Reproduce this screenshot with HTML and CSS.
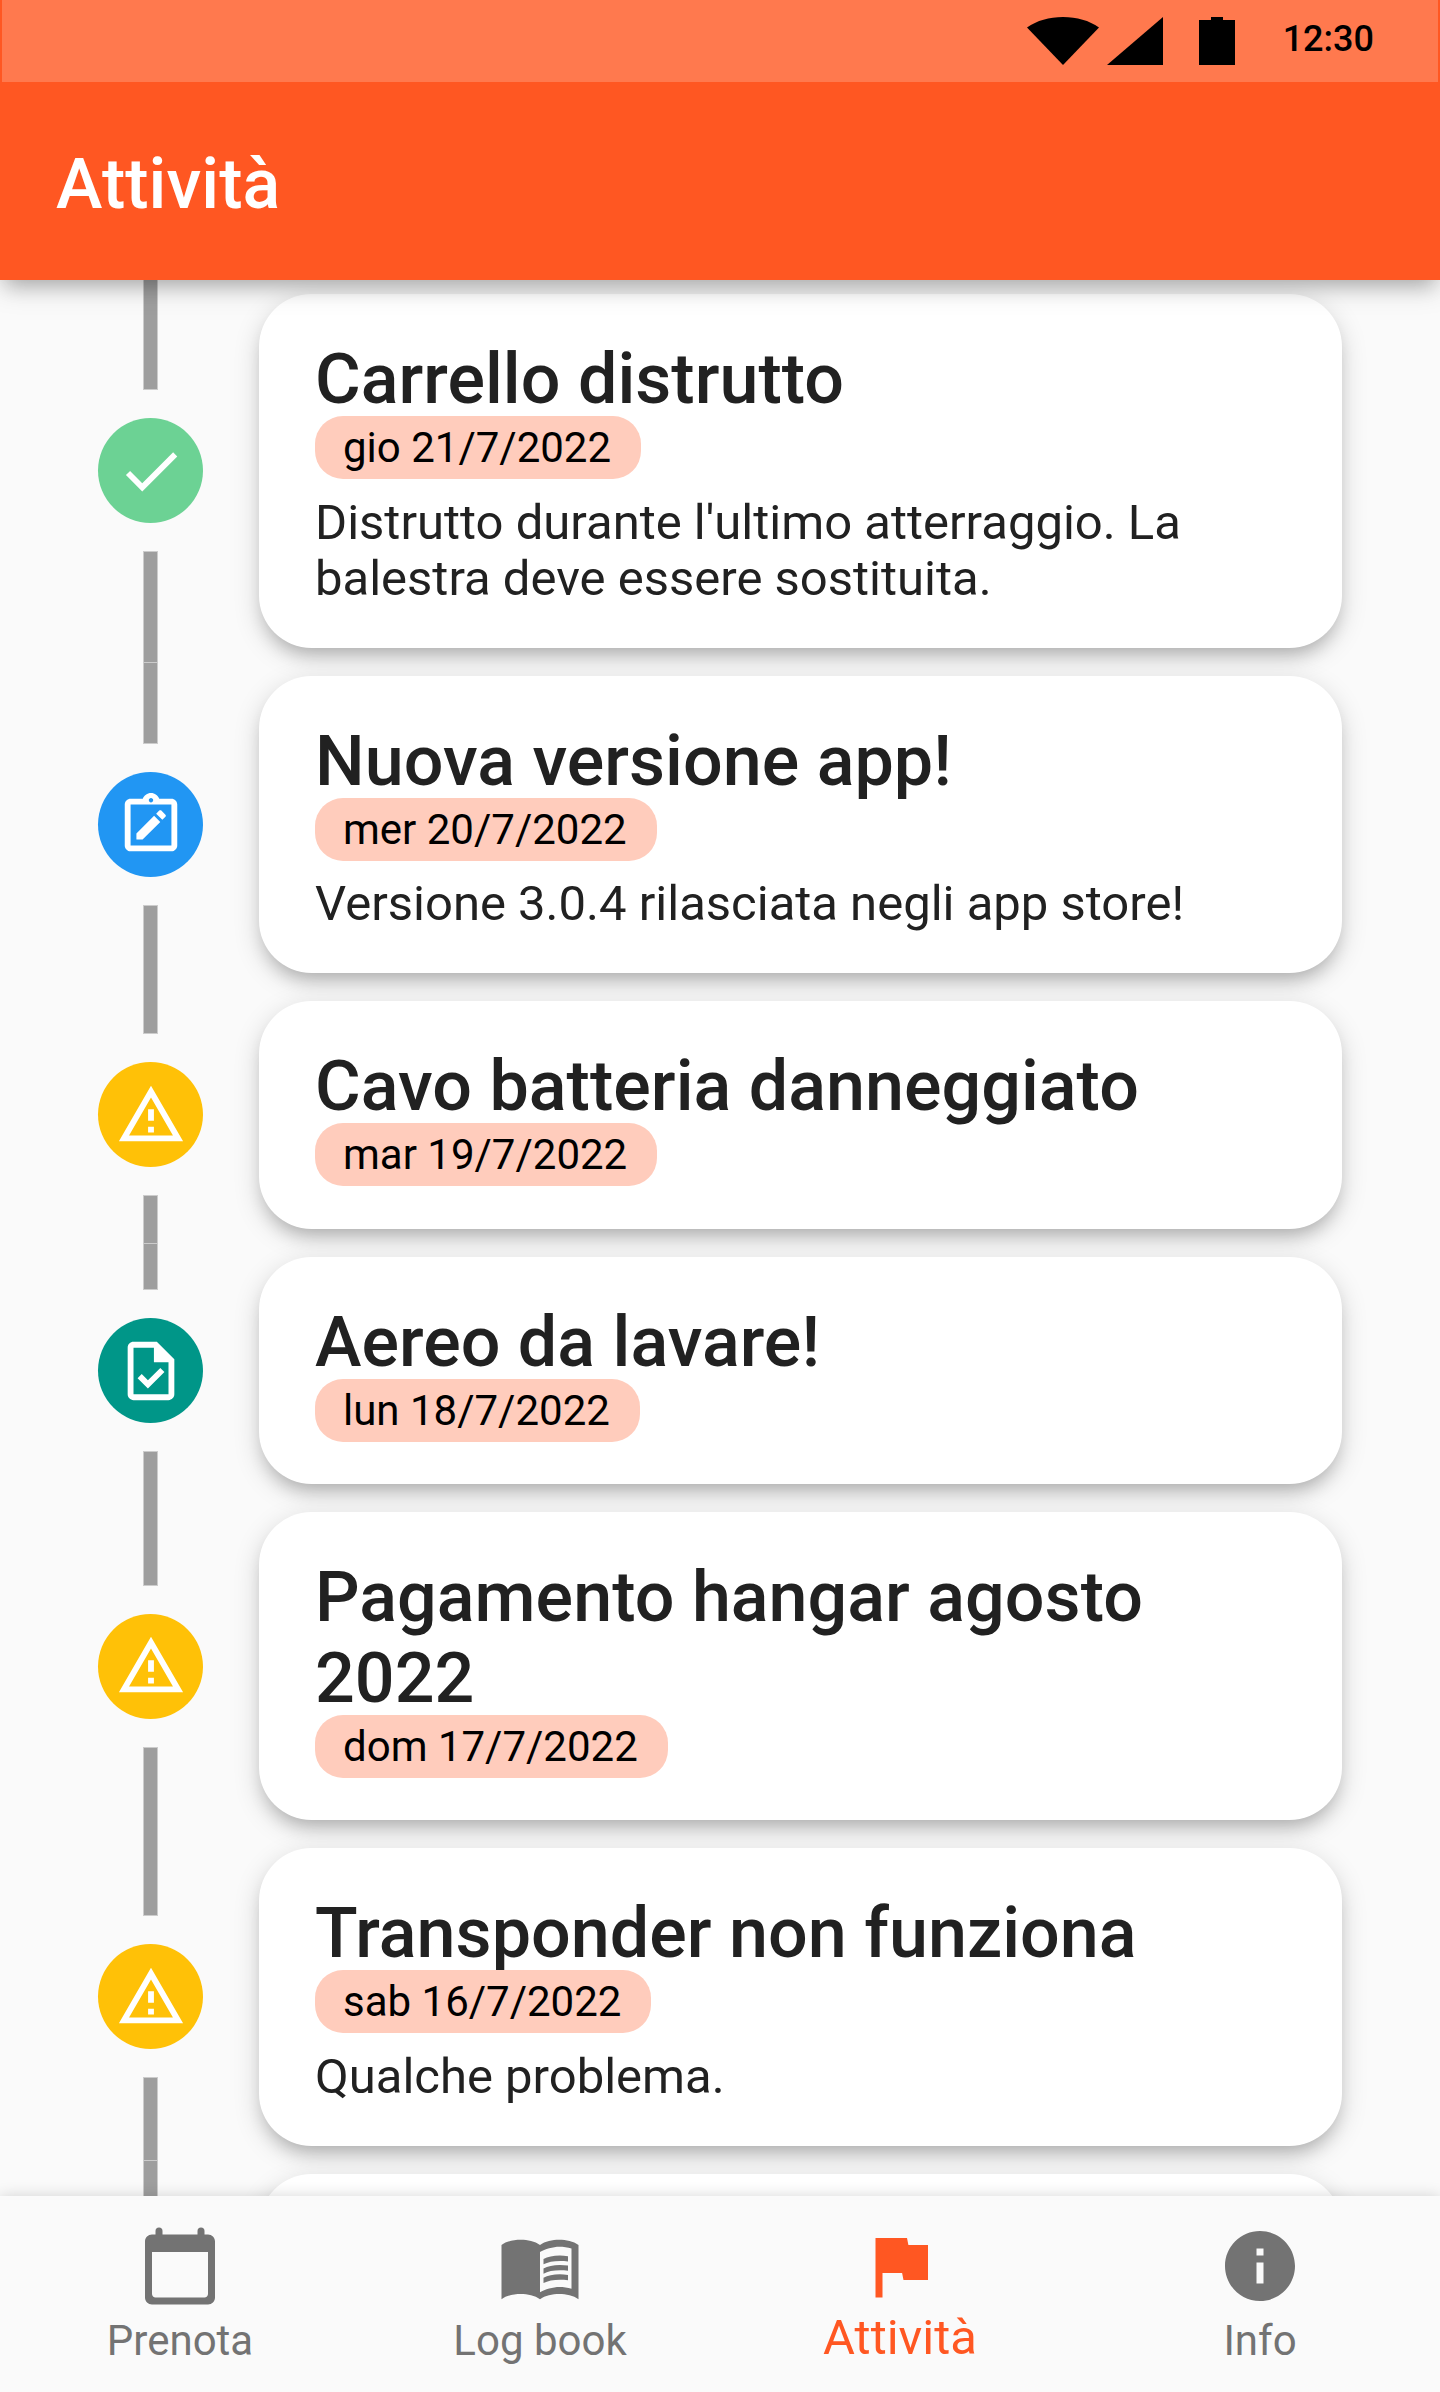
FILE: index.html
```html
<!DOCTYPE html>
<html lang="it">
<head>
<meta charset="utf-8">
<title>Attività</title>
<link rel="stylesheet" href="styles.css">
</head>
<body>
<svg class="defs" width="0" height="0" aria-hidden="true">
  <symbol id="i-check" viewBox="0 0 24 24"><path d="M9 16.17 4.83 12l-1.42 1.41L9 19 21 7l-1.41-1.41z"/></symbol>
  <symbol id="i-note" viewBox="0 0 24 24"><path fill-rule="evenodd" d="M19 3h-4.18C14.4 1.84 13.3 1 12 1s-2.4.84-2.82 2H5c-1.1 0-2 .9-2 2v14c0 1.1.9 2 2 2h14c1.1 0 2-.9 2-2V5c0-1.1-.9-2-2-2zm-7-.25c.41 0 .75.34.75.75s-.34.75-.75.75-.75-.34-.75-.75.34-.75.75-.75zM19 19H5V5h14z"/><path d="M7 17v-2.12l6.06-6.06 2.12 2.12L9.12 17zM15.89 10.23l-2.12-2.12 1.06-1.06c.2-.2.51-.2.71 0l1.41 1.41c.2.2.2.51 0 .71z"/></symbol>
  <symbol id="i-warn" viewBox="0 0 24 24"><path fill-rule="evenodd" d="M12 5.99 19.53 19H4.47zM12 2 1 21h22z"/><path d="M11 16h2v2h-2zM11 10h2v4h-2z"/></symbol>
  <symbol id="i-task" viewBox="0 0 24 24"><path fill-rule="evenodd" d="M14 2H6c-1.1 0-2 .9-2 2v16c0 1.1.9 2 2 2h12c1.1 0 2-.9 2-2V8zm4 18H6V4h7v5h5z"/><path d="M8.82 13.05 7.4 14.46 10.94 18l5.66-5.66-1.41-1.41-4.24 4.24z"/></symbol>
  <symbol id="i-calendar" viewBox="0 0 24 24"><path fill-rule="evenodd" d="M7 3V2a1 1 0 0 0-2 0v1H4c-1.1 0-2 .9-2 2v16c0 1.1.9 2 2 2h16c1.1 0 2-.9 2-2V5c0-1.1-.9-2-2-2h-1V2a1 1 0 0 0-2 0v1zM4 8h16v12c0 .55-.45 1-1 1H5c-.55 0-1-.45-1-1z"/></symbol>
  <symbol id="i-book" viewBox="0 0 24 24"><path fill-rule="evenodd" d="M1 6c1.45-1.1 3.55-1.5 5.5-1.5s4.05.4 5.5 1.5c1.45-1.1 3.55-1.5 5.5-1.5s4.05.4 5.5 1.5v15.5c-1.45-1.1-3.55-1.5-5.5-1.5s-4.05.4-5.5 1.5c-1.45-1.1-3.55-1.5-5.5-1.5S2.45 20.4 1 21.5zM21 18.5V7c-1.1-.35-2.3-.5-3.5-.5-1.7 0-4.15.65-5.5 1.5v11.5c1.35-.85 3.8-1.5 5.5-1.5 1.2 0 2.4.15 3.5.5z"/><path d="M13 10c1.6-.8 4-1.25 7-.8v1.5c-3-.35-5.4 0-7 .8zM13 12.68c1.6-.8 4-1.25 7-.8v1.5c-3-.35-5.4 0-7 .8zM13 15.35c1.6-.8 4-1.25 7-.8v1.5c-3-.35-5.4 0-7 .8z"/></symbol>
  <symbol id="i-flag" viewBox="0 0 24 24"><path d="M14.4 6 14 4H5v17h2v-7h5.6l.4 2h7V6z"/></symbol>
  <symbol id="i-info" viewBox="0 0 24 24"><path fill-rule="evenodd" d="M12 2C6.48 2 2 6.48 2 12s4.48 10 10 10 10-4.48 10-10S17.52 2 12 2zm1 15h-2v-6h2zm0-8h-2V7h2z"/></symbol>
</svg>
<div class="screen">
  <header class="appbar">
    <div class="status">
      <svg class="wifi" viewBox="0 0 72 48"><path d="M36 48 0 10.500C10 3.500 22 0 36 0s26 3.500 36 10.500z"/></svg>
      <svg class="signal" viewBox="0 0 56 48"><path d="M56 0v48H0z"/></svg>
      <svg class="battery" viewBox="0 0 36 48"><path d="M12 0h12v3h12v45H0V3h12z"/></svg>
      <span class="time">12:30</span>
    </div>
    <h1 class="appbar-title">Attività</h1>
  </header>

  <main class="timeline">
    <article class="row">
      <div class="rail"><i class="line"></i><span class="dot green"><svg><use href="#i-check"/></svg></span><i class="line line-end"></i></div>
      <div class="card"><h2>Carrello distrutto</h2><span class="chip">gio 21/7/2022</span><p>Distrutto durante l'ultimo atterraggio. La balestra deve essere sostituita.</p></div>
    </article>
    <article class="row">
      <div class="rail"><i class="line seam"></i><span class="dot blue"><svg><use href="#i-note"/></svg></span><i class="line line-end"></i></div>
      <div class="card"><h2>Nuova versione app!</h2><span class="chip">mer 20/7/2022</span><p>Versione 3.0.4 rilasciata negli app store!</p></div>
    </article>
    <article class="row">
      <div class="rail"><i class="line"></i><span class="dot amber"><svg><use href="#i-warn"/></svg></span><i class="line line-end"></i></div>
      <div class="card"><h2>Cavo batteria danneggiato</h2><span class="chip">mar 19/7/2022</span></div>
    </article>
    <article class="row">
      <div class="rail"><i class="line seam"></i><span class="dot teal"><svg><use href="#i-task"/></svg></span><i class="line line-end"></i></div>
      <div class="card"><h2>Aereo da lavare!</h2><span class="chip">lun 18/7/2022</span></div>
    </article>
    <article class="row">
      <div class="rail"><i class="line"></i><span class="dot amber"><svg><use href="#i-warn"/></svg></span><i class="line line-end"></i></div>
      <div class="card"><h2>Pagamento hangar agosto 2022</h2><span class="chip">dom 17/7/2022</span></div>
    </article>
    <article class="row">
      <div class="rail"><i class="line"></i><span class="dot amber"><svg><use href="#i-warn"/></svg></span><i class="line line-end"></i></div>
      <div class="card"><h2>Transponder non funziona</h2><span class="chip">sab 16/7/2022</span><p>Qualche problema.</p></div>
    </article>
    <article class="row row-partial">
      <div class="rail"><i class="line seam"></i></div>
      <div class="card"></div>
    </article>
  </main>

  <nav class="tabs">
    <a class="tab"><svg><use href="#i-calendar"/></svg><span>Prenota</span></a>
    <a class="tab"><svg><use href="#i-book"/></svg><span>Log book</span></a>
    <a class="tab active"><svg><use href="#i-flag"/></svg><span>Attività</span></a>
    <a class="tab"><svg><use href="#i-info"/></svg><span>Info</span></a>
  </nav>
</div>
</body>
</html>
```

FILE: styles.css
```css
* { box-sizing: border-box; margin: 0; padding: 0; }

body {
  font-family: Roboto, "Liberation Sans", sans-serif;
  background: #fafafa;
}

svg { display: block; fill: currentColor; }
.defs { position: absolute; }

.screen {
  width: 1440px;
  height: 2392px;
  display: flex;
  flex-direction: column;
  overflow: hidden;
}

/* App bar */
.appbar {
  position: relative;
  z-index: 2;
  height: 280px;
  flex: none;
  background: #ff5722;
  box-shadow: 0 12px 18px -7px rgba(0, 0, 0, .2), 0 8px 26px rgba(0, 0, 0, .17);
}
.status {
  height: 82px;
  margin: 0 2px;
  padding: 17px 64px 0 0;
  display: flex;
  justify-content: flex-end;
  background: #ff794e;
  color: #000;
}
.wifi { width: 72px; height: 48px; }
.signal { width: 56px; height: 48px; margin-left: 8px; }
.battery { width: 36px; height: 48px; margin-left: 36px; }
.time {
  margin-left: 48px;
  font-size: 36px;
  font-weight: 500;
  line-height: 44px;
}
.appbar-title {
  padding-left: 56px;
  margin-top: 61px;
  color: #fff;
  font-size: 70px;
  font-weight: 500;
  line-height: 82px;
  letter-spacing: .05px;
}

/* Timeline */
.timeline {
  height: 1916px;
  flex: none;
  overflow: hidden;
}
.row {
  display: flex;
  gap: 56px;
  padding: 0 98px;
}
.rail {
  width: 105px;
  flex: none;
  display: flex;
  flex-direction: column;
  align-items: center;
  gap: 28px;
}
.line {
  width: 15px;
  flex: 1;
  background: #9e9e9e;
  background-clip: padding-box;
  border: solid rgba(158, 158, 158, .5);
  border-width: 0 1px 1px;
}
.line-end { border-width: 1px 1px 0; }
.seam { border-top-width: 1px; }
.dot {
  width: 105px;
  height: 105px;
  flex: none;
  display: grid;
  place-items: center;
  border-radius: 50%;
  color: #fff;
}
.dot svg { width: 70px; height: 70px; }
.green { background: #6cd294; }
.blue { background: #2196f3; }
.amber { background: #ffc107; }
.teal { background: #009688; }

.card {
  flex: 1;
  margin: 14px 0;
  padding: 42px 56px;
  display: flex;
  flex-direction: column;
  align-items: flex-start;
  background: #fff;
  border-radius: 52.5px;
  box-shadow: 0 12px 18px -7px rgba(0, 0, 0, .2), 0 8px 26px rgba(0, 0, 0, .17);
  color: #212121;
}
.card h2 {
  margin: 3px 0 -3.1px;
  font-size: 70px;
  font-weight: 500;
  line-height: 80.5px;
  letter-spacing: .04px;
}
.chip {
  height: 63px;
  margin-bottom: .1px;
  padding: 0 30px 0 28px;
  border-radius: 28px;
  background: #ffccbc;
  color: #000;
  font-size: 42px;
  line-height: 63px;
}
.card p {
  margin: 15px 0 -1px;
  font-size: 49px;
  line-height: 56px;
}
.row-partial { height: 200px; }

/* Bottom navigation */
.tabs {
  position: relative;
  z-index: 2;
  height: 196px;
  flex: none;
  display: grid;
  grid-template-columns: repeat(4, 1fr);
  background: #fafafa;
  box-shadow: 0 0 14px rgba(0, 0, 0, .16);
}
.tab {
  display: flex;
  flex-direction: column;
  align-items: center;
  padding-top: 28px;
  color: #737373;
}
.tab svg { width: 84px; height: 84px; }
.tab span {
  margin-top: 8px;
  font-size: 42px;
  line-height: 50px;
}
.active { color: #ff5722; }
.active span { margin-top: 2px; font-size: 49px; line-height: 56px; }
```
